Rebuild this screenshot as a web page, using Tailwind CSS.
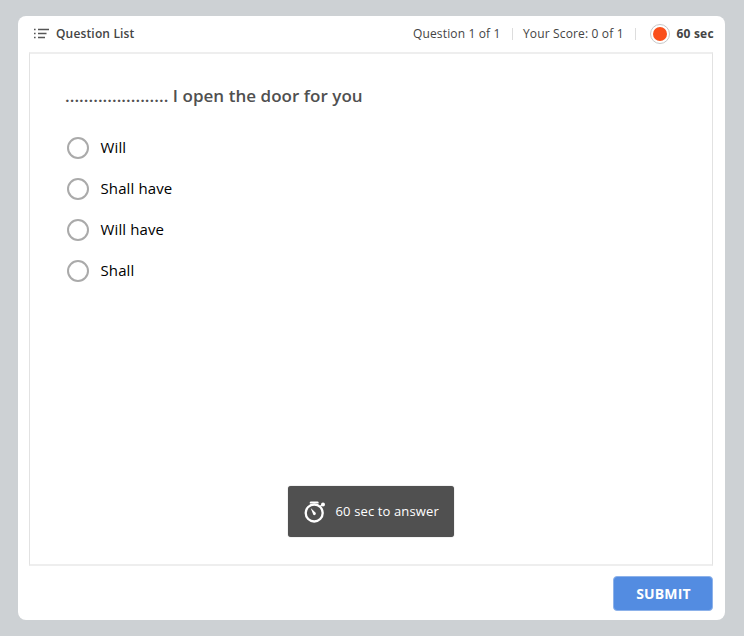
<!DOCTYPE html>
<html lang="en">
<head>
<meta charset="utf-8">
<title>Question</title>
<script src="https://cdn.jsdelivr.net/npm/@tailwindcss/browser@4"></script>
</head>
<body class="h-[636px] w-[744px] overflow-hidden bg-[#cdd1d4] pl-[18px] pt-4 font-['Open_Sans','Noto_Sans',sans-serif]">
<main class="flex h-[604px] w-[707px] flex-col rounded-[8px] bg-white pl-[11px] pr-3">
  <header class="flex h-9 shrink-0 items-center text-[12px] text-[#444]">
    <svg class="ml-[5px] mr-[7px] h-[12px] w-[15px]" viewBox="0 0 15 12" fill="#555"><path d="M0 .7h1.6v1.5H0zM4 .7h11v1.6H4zM0 4.7h1.6v1.5H0zM4 4.7h8.5v1.6H4zM0 8.7h1.6v1.5H0zM4 8.7h7v1.6H4z"/></svg>
    <span class="font-semibold tracking-[0.16px]">Question List</span>
    <div class="ml-auto flex items-center">
      <span class="w-[87px] whitespace-nowrap tracking-[0.14px]">Question 1 of 1</span>
      <i class="ml-3 mr-[10px] h-3 w-px bg-[#ddd]"></i>
      <span class="w-[102px] whitespace-nowrap tracking-[0.15px]">Your Score: 0 of 1</span>
      <i class="ml-[10px] mr-[14px] h-3 w-px bg-[#ddd]"></i>
      <span class="mr-[6px] flex size-5 items-center justify-center rounded-full border border-[#c8c8c8]"><i class="size-[14px] rounded-full bg-[#fa4f1b]"></i></span>
      <b class="w-[37px] whitespace-nowrap pl-[0.5px] tracking-[0.2px]">60 sec</b>
    </div>
  </header>
  <section class="relative h-[514px] shrink-0 border-x border-y-2 border-x-[#e2e2e2] border-y-[#eee] pl-[35px] pt-[30px]">
    <h1 class="h-6 whitespace-nowrap text-[17px] font-semibold leading-6 tracking-[0.04px] text-[#505050]">...................... I open the door for you</h1>
    <div class="ml-[2px] mt-[19px] flex flex-col text-[15px] leading-[41px] tracking-[0.12px] text-black">
      <label class="flex h-[41px] items-center"><i class="mr-[11.5px] size-[22px] rounded-full border-2 border-[#aaa]"></i>Will</label>
      <label class="flex h-[41px] items-center"><i class="mr-[11.5px] size-[22px] rounded-full border-2 border-[#aaa]"></i>Shall have</label>
      <label class="flex h-[41px] items-center"><i class="mr-[11.5px] size-[22px] rounded-full border-2 border-[#aaa]"></i>Will have</label>
      <label class="flex h-[41px] items-center"><i class="mr-[11.5px] size-[22px] rounded-full border-2 border-[#aaa]"></i>Shall</label>
    </div>
    <div class="absolute left-[258px] top-[432px] flex h-[51px] w-[166px] items-center rounded-[3px] bg-[#505050] text-[13px] text-white shadow-[0_0_1px_#777]">
      <svg class="ml-4 mr-[9.5px] size-[22px]" viewBox="0 0 22 22" fill="none" stroke="white"><circle cx="10.2" cy="12" r="8.5" stroke-width="2.3"/><path d="M5.8 2.4V1.6q0-1.2 1.2-1.2h6.4q1.2 0 1.2 1.2v.8z" stroke="none" fill="white"/><path d="M16.3 5.3 18.7 3.5" stroke-width="1.4"/><circle cx="19" cy="3.6" r="2" fill="white" stroke="none"/><path d="M6.7 7.1l4.9 4.7a1.5 1.5 0 0 1-2.3 1.9z" fill="white" stroke="none"/></svg>
      <span class="whitespace-nowrap tracking-[0.13px]">60 sec to answer</span>
    </div>
  </section>
  <button class="ml-auto mt-[10px] h-[35px] w-[100px] rounded-[4px] border border-[#8db2ea] bg-[#538ce1] pl-px text-[14px] font-bold tracking-[0.15px] text-white">SUBMIT</button>
</main>
</body>
</html>
